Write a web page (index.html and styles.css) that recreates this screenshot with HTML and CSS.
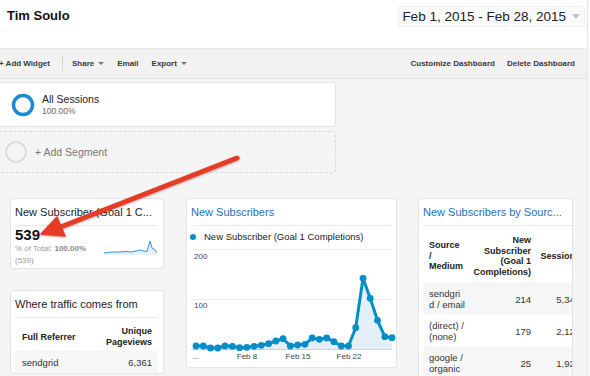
FILE: index.html
```html
<!DOCTYPE html>
<html>
<head>
<meta charset="utf-8">
<title>Tim Soulo - Dashboard</title>
<link rel="stylesheet" href="styles.css">
</head>
<body>
<div class="m_page">

<div class="m_hdr">
<h1>Tim Soulo</h1>
<div class="d_range">Feb 1, 2015 - Feb 28, 2015<span class="caret"></span></div>
</div>

<div class="m_ctrl">
<div class="grp">
<span>+ Add Widget</span>
<i class="sep"></i>
<span>Share<b class="dd"></b></span>
<span>Email</span>
<span>Export<b class="dd"></b></span>
</div>
<div class="grp">
<span>Customize Dashboard</span>
<span>Delete Dashboard</span>
</div>
</div>

<div class="m_segs">
<div class="seg">
<svg width="24" height="24" viewBox="0 0 24 24"><circle cx="12" cy="12" r="9.5" fill="none" stroke="#1b8ad2" stroke-width="3.5"/></svg>
<div class="seg_txt"><div>All Sessions</div><small>100.00%</small></div>
</div>
<div class="seg seg_add">
<svg width="22" height="22" viewBox="0 0 22 22"><circle cx="11" cy="11" r="10" fill="none" stroke="#dedede" stroke-width="2"/></svg>
<span>+ Add Segment</span>
</div>
</div>

<div class="m_body">

<div class="col col1">
<div class="wdg w_metric">
<div class="wdg_ttl">New Subscriber (Goal 1 C...</div>
<div class="mt_body">
<div>
<div class="mt_val">539</div>
<div class="mt_sub">% of Total: <b>100.00%</b><br>(539)</div>
</div>
<svg class="spark" width="53" height="16" viewBox="0 0 53 16">
<path d="M0 14 L8 13 L15 13 L22 12.5 L27 13 L32 12 L36 11 L40 12 L43 12.5 L46 2 L48 9 L51 11 L53 13.5 L53 16 L0 16 Z" fill="#e4f0fa"/>
<path d="M0 14 L8 13 L15 13 L22 12.5 L27 13 L32 12 L36 11 L40 12 L43 12.5 L46 2 L48 9 L51 11 L53 13.5" fill="none" stroke="#3a8fd6" stroke-width="1"/>
</svg>
</div>
</div>

<div class="wdg w_tbl w_ref">
<div class="wdg_ttl">Where traffic comes from</div>
<table class="tbl">
<thead><tr><th class="c_l">Full Referrer</th><th class="c_r">Unique<br>Pageviews</th></tr></thead>
<tbody><tr><td class="c_l">sendgrid</td><td class="c_r">6,361</td></tr></tbody>
</table>
</div>
</div>

<div class="col col2">
<div class="wdg w_chart">
<div class="wdg_ttl lnk">New Subscribers</div>
<div class="lgd"><i></i>New Subscriber (Goal 1 Completions)</div>
<svg class="chart" width="201" height="122" viewBox="0 0 201 122">
<line x1="0" y1="4.5" x2="201" y2="4.5" stroke="#ececec"/>
<line x1="0" y1="54.5" x2="201" y2="54.5" stroke="#ececec"/>
<line x1="0" y1="104.5" x2="201" y2="104.5" stroke="#cfcfcf"/>
<text x="3" y="14" class="ax">200</text>
<text x="3" y="63" class="ax">100</text>
<text x="1" y="114" class="ax">...</text>
<text x="56" y="114" class="ax" text-anchor="middle">Feb 8</text>
<text x="107" y="114" class="ax" text-anchor="middle">Feb 15</text>
<text x="158" y="114" class="ax" text-anchor="middle">Feb 22</text>
<polygon fill="#e3eff9" points="5,104 5,101 12.3,101 19.5,103 26.8,103 34,101 41.3,101.3 48.6,102.7 55.8,102.3 63.1,101.3 70.3,100.3 77.6,98.7 84.9,96 92.1,93.7 99.4,101 106.6,100 113.9,99.3 121.2,93 128.4,94.3 135.7,93 142.9,96.7 150.2,101 157.5,101 164.7,82.7 172,33.3 179.2,53.3 186.5,75.3 193.8,91.7 201,92.7 201,104"/>
<polyline fill="none" stroke="#058dc7" stroke-width="3" stroke-linejoin="round" points="5,101 12.3,101 19.5,103 26.8,103 34,101 41.3,101.3 48.6,102.7 55.8,102.3 63.1,101.3 70.3,100.3 77.6,98.7 84.9,96 92.1,93.7 99.4,101 106.6,100 113.9,99.3 121.2,93 128.4,94.3 135.7,93 142.9,96.7 150.2,101 157.5,101 164.7,82.7 172,33.3 179.2,53.3 186.5,75.3 193.8,91.7 201,92.7"/>
<g fill="#058dc7">
<circle cx="5" cy="101" r="3.4"/><circle cx="12.3" cy="101" r="3.4"/><circle cx="19.5" cy="103" r="3.4"/><circle cx="26.8" cy="103" r="3.4"/>
<circle cx="34" cy="101" r="3.4"/><circle cx="41.3" cy="101.3" r="3.4"/><circle cx="48.6" cy="102.7" r="3.4"/><circle cx="55.8" cy="102.3" r="3.4"/>
<circle cx="63.1" cy="101.3" r="3.4"/><circle cx="70.3" cy="100.3" r="3.4"/><circle cx="77.6" cy="98.7" r="3.4"/><circle cx="84.9" cy="96" r="3.4"/>
<circle cx="92.1" cy="93.7" r="3.4"/><circle cx="99.4" cy="101" r="3.4"/><circle cx="106.6" cy="100" r="3.4"/><circle cx="113.9" cy="99.3" r="3.4"/>
<circle cx="121.2" cy="93" r="3.4"/><circle cx="128.4" cy="94.3" r="3.4"/><circle cx="135.7" cy="93" r="3.4"/><circle cx="142.9" cy="96.7" r="3.4"/>
<circle cx="150.2" cy="101" r="3.4"/><circle cx="157.5" cy="101" r="3.4"/><circle cx="164.7" cy="82.7" r="3.4"/><circle cx="172" cy="33.3" r="3.4"/>
<circle cx="179.2" cy="53.3" r="3.4"/><circle cx="186.5" cy="75.3" r="3.4"/><circle cx="193.8" cy="91.7" r="3.4"/><circle cx="201" cy="92.7" r="3.4"/>
</g>
</svg>
</div>
</div>

<div class="col col3">
<div class="wdg w_tbl w_src">
<div class="wdg_ttl lnk">New Subscribers by Sourc...</div>
<table class="tbl">
<colgroup><col style="width:44px"><col style="width:70px"><col style="width:51px"></colgroup>
<thead><tr><th class="c_l">Source<br>/<br>Medium</th><th class="c_r">New<br>Subscriber<br>(Goal 1<br>Completions)</th><th class="c_r c_x">Sessions</th></tr></thead>
<tbody>
<tr><td class="c_l">sendgri<br>d / email</td><td class="c_r">214</td><td class="c_r c_x">5,341</td></tr>
<tr><td class="c_l">(direct) /<br>(none)</td><td class="c_r">179</td><td class="c_r c_x">2,127</td></tr>
<tr><td class="c_l">google /<br>organic</td><td class="c_r">25</td><td class="c_r c_x">1,925</td></tr>
</tbody>
</table>
</div>
</div>

</div>

<svg class="annot" width="590" height="376" viewBox="0 0 590 376">
<path d="M237 158 L58 228" stroke="#e63b25" stroke-width="5" stroke-linecap="round"/>
<polygon points="41,234 57,217 65,236" fill="#e63b25" stroke="#e63b25" stroke-width="1.5" stroke-linejoin="round"/>
</svg>

</div>
</body>
</html>
```

FILE: styles.css
```css
body {margin:0;background:#fafafa;font-family:"Liberation Sans",Arial,sans-serif;color:#222;overflow:hidden;}
.m_page {position:relative;width:588px;height:376px;overflow:hidden;background:#f5f5f5;border-right:1px solid #e6e6e6;box-sizing:border-box;}

.m_hdr {height:48px;background:#fff;display:flex;justify-content:space-between;align-items:flex-start;}
.m_hdr h1 {margin:0;padding:8px 0 0 7px;font-size:13px;line-height:16px;font-weight:bold;color:#111;}
.d_range {display:flex;align-items:center;margin:6px 2px 0 0;height:19px;line-height:19px;padding:0 4px 0 3px;font-size:13.5px;color:#222;background:#fafafa;border:1px solid #f0f0f0;border-radius:2px;}
.d_range .caret {width:0;height:0;border-top:5px solid #c4c4c4;border-left:4px solid transparent;border-right:4px solid transparent;margin-left:6px;}

.m_ctrl {display:flex;justify-content:space-between;align-items:center;height:29px;border-top:1px solid #e8e8e8;border-bottom:1px solid #e2e2e2;background:#f2f2f2;font-size:8px;font-weight:bold;color:#3a3a3a;white-space:nowrap;}
.m_ctrl .grp {display:flex;align-items:center;}
.m_ctrl .grp:first-child {margin-left:-1px;}
.m_ctrl .grp:last-child {margin-right:12px;}
.m_ctrl span {margin-right:13px;display:flex;align-items:center;}
.m_ctrl .grp span:first-child {margin-right:12px;}
.m_ctrl .grp:last-child span:last-child {margin-right:0;}
.m_ctrl .sep {width:1px;height:15px;background:#d6d6d6;margin-right:9px;}
.m_ctrl .dd {width:0;height:0;border-top:3px solid #777;border-left:3px solid transparent;border-right:3px solid transparent;margin-left:4px;}

.m_segs {margin-left:-4px;width:340px;padding-top:3px;}
.seg {display:flex;align-items:center;height:43px;padding-left:14px;background:#fff;border:1px solid #e3e3e3;border-radius:3px;}
.seg svg {display:block;}
.seg_txt {margin-left:7px;}
.seg_txt div {font-size:10.5px;line-height:13px;color:#222;}
.seg_txt small {display:block;font-size:8.5px;line-height:11px;color:#666;}
.seg_add {margin-top:4px;height:40px;padding-left:8px;background:transparent;border:1px dashed #d9d9d9;color:#777;font-size:10.5px;}
.seg_add span {margin-left:8px;}

.m_body {display:flex;align-items:flex-start;padding:25px 0 0 10px;}
.col1 {width:154px;}
.col2 {width:211px;margin-left:22px;}
.col3 {width:155px;margin-left:21px;}

.wdg {background:#fff;border:1px solid #e3e3e3;border-radius:3px;padding:0 5px 0 4px;box-sizing:border-box;overflow:hidden;}
.col1 .wdg + .wdg {margin-top:21px;}
.wdg_ttl {height:26px;line-height:26px;font-size:11px;color:#222;border-bottom:1px solid #e6e6e6;white-space:nowrap;overflow:hidden;}
.wdg_ttl.lnk {color:#2a6db8;}

.w_metric {padding-bottom:1px;}
.mt_body {display:flex;justify-content:space-between;}
.mt_val {font-size:15px;line-height:17px;font-weight:bold;color:#111;}
.mt_sub {font-size:8px;line-height:12px;color:#9a9a9a;}
.mt_sub b {color:#8a8a8a;}
.spark {display:block;margin:13px 1px 0 0;}

.lgd {display:flex;align-items:center;padding-top:3px;line-height:16px;font-size:9.5px;color:#222;}
.lgd i {width:6px;height:6px;border-radius:50%;background:#058dc7;margin:0 8px 0 -1px;}
.chart {display:block;overflow:visible;}
.chart .ax {font-size:8px;fill:#444;font-family:"Liberation Sans",Arial,sans-serif;}

.tbl {border-collapse:collapse;table-layout:fixed;}
.tbl th {font-size:9px;line-height:10.5px;font-weight:bold;color:#222;vertical-align:middle;white-space:nowrap;}
.tbl td {font-size:9.5px;line-height:11px;color:#333;white-space:nowrap;overflow:hidden;}
.tbl tbody tr:nth-child(odd) td {background:#f6f6f6;}
.tbl .c_l {text-align:left;}
.tbl .c_r {text-align:right;}

.w_ref .tbl {width:100%;}
.w_ref th {padding:8px 6px 3px 7px;line-height:11px;}
.w_ref td {padding:6px 6px 5px 7px;}

.w_src {padding-right:0;}
.w_src .tbl {width:165px;}
.w_src th {padding:9px 6px 5px 2px;}
.w_src th.c_l, .w_src td.c_l {padding-left:6px;padding-right:0;}
.w_src td {padding:6px 6px 4px 2px;}
.w_src .c_x {padding-right:8px;}
.w_src th.c_x {padding-right:8px;}

.annot {position:absolute;left:0;top:0;pointer-events:none;filter:drop-shadow(0 1px 1px rgba(80,0,0,0.35));}
```
